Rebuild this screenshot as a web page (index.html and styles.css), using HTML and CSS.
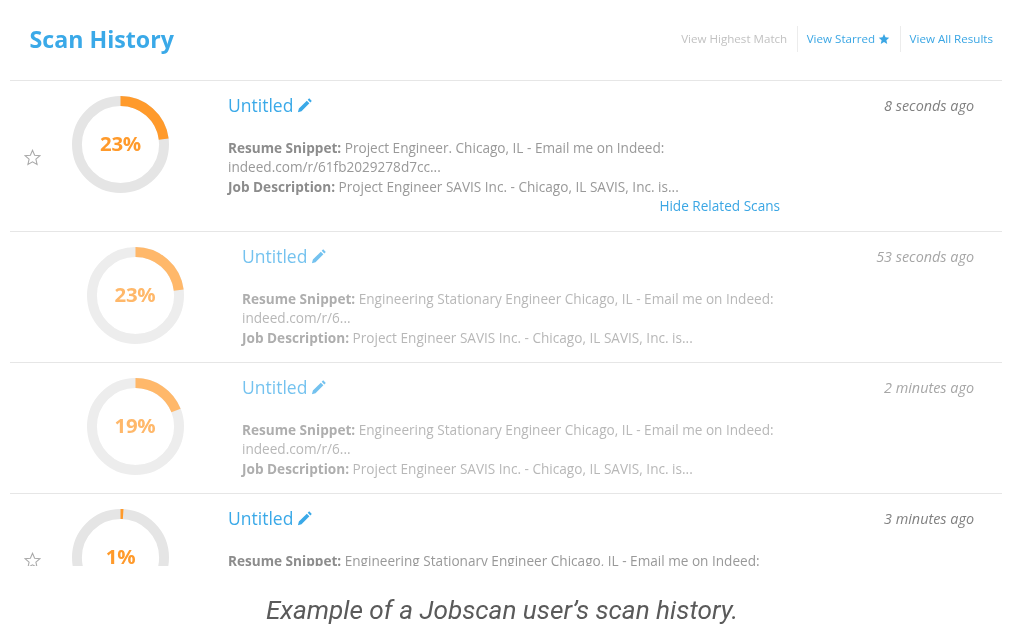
FILE: index.html
```html
<!DOCTYPE html>
<html lang="en">
<head>
<meta charset="utf-8">
<title>Scan History</title>
<link rel="stylesheet" href="styles.css">
</head>
<body>
<svg class="defs" width="0" height="0" aria-hidden="true">
  <defs>
    <path id="pencil" d="M12.2 1.3l2.6 2.6-1.5 1.5-2.6-2.6zM9.8 3.7l2.6 2.6-7.9 7.9-3.6 1 1-3.6z"/>
    <path id="star" d="M8 1.2l2 4.6 5 .5-3.8 3.3 1.1 4.9L8 12l-4.3 2.5 1.1-4.9L1 6.3l5-.5z"/>
  </defs>
</svg>
<div class="shot">
  <section class="panel">
    <header class="top">
      <h1 class="heading">Scan History</h1>
      <nav class="filters">
        <a class="filter filter-off">View Highest Match</a>
        <a class="filter">View Starred <svg class="mini-star" viewBox="0 0 16 16"><use href="#star"/></svg></a>
        <a class="filter">View All Results</a>
      </nav>
    </header>

    <article class="row row-main">
      <div class="slot"><svg class="star" viewBox="0 0 16 16"><use href="#star"/></svg></div>
      <div class="donut">
        <svg class="ring" viewBox="0 0 98 98"><circle class="track" cx="49" cy="49" r="44"/><circle class="value" cx="49" cy="49" r="44" pathLength="100" stroke-dasharray="23 100"/></svg>
        <span class="pct">23%</span>
      </div>
      <div class="body">
        <div class="head">
          <a class="name">Untitled <svg class="pencil" viewBox="0 0 16 16"><use href="#pencil"/></svg></a>
          <time class="ago">8 seconds ago</time>
        </div>
        <p class="desc"><b>Resume Snippet:</b> Project Engineer. Chicago, IL - Email me on Indeed:<br>indeed.com/r/61fb2029278d7cc...<br><b>Job Description:</b> Project Engineer SAVIS Inc. - Chicago, IL SAVIS, Inc. is...</p>
        <a class="related">Hide Related Scans</a>
      </div>
    </article>

    <article class="row row-sub">
      <div class="slot"></div>
      <div class="donut">
        <svg class="ring" viewBox="0 0 98 98"><circle class="track" cx="49" cy="49" r="44"/><circle class="value" cx="49" cy="49" r="44" pathLength="100" stroke-dasharray="23 100"/></svg>
        <span class="pct">23%</span>
      </div>
      <div class="body">
        <div class="head">
          <a class="name">Untitled <svg class="pencil" viewBox="0 0 16 16"><use href="#pencil"/></svg></a>
          <time class="ago">53 seconds ago</time>
        </div>
        <p class="desc"><b>Resume Snippet:</b> Engineering Stationary Engineer Chicago, IL - Email me on Indeed:<br>indeed.com/r/6...<br><b>Job Description:</b> Project Engineer SAVIS Inc. - Chicago, IL SAVIS, Inc. is...</p>
      </div>
    </article>

    <article class="row row-sub">
      <div class="slot"></div>
      <div class="donut">
        <svg class="ring" viewBox="0 0 98 98"><circle class="track" cx="49" cy="49" r="44"/><circle class="value" cx="49" cy="49" r="44" pathLength="100" stroke-dasharray="19 100"/></svg>
        <span class="pct">19%</span>
      </div>
      <div class="body">
        <div class="head">
          <a class="name">Untitled <svg class="pencil" viewBox="0 0 16 16"><use href="#pencil"/></svg></a>
          <time class="ago">2 minutes ago</time>
        </div>
        <p class="desc"><b>Resume Snippet:</b> Engineering Stationary Engineer Chicago, IL - Email me on Indeed:<br>indeed.com/r/6...<br><b>Job Description:</b> Project Engineer SAVIS Inc. - Chicago, IL SAVIS, Inc. is...</p>
      </div>
    </article>

    <article class="row row-main">
      <div class="slot"><svg class="star" viewBox="0 0 16 16"><use href="#star"/></svg></div>
      <div class="donut">
        <svg class="ring" viewBox="0 0 98 98"><circle class="track" cx="49" cy="49" r="44"/><circle class="value" cx="49" cy="49" r="44" pathLength="100" stroke-dasharray="1 100"/></svg>
        <span class="pct">1%</span>
      </div>
      <div class="body">
        <div class="head">
          <a class="name">Untitled <svg class="pencil" viewBox="0 0 16 16"><use href="#pencil"/></svg></a>
          <time class="ago">3 minutes ago</time>
        </div>
        <p class="desc"><b>Resume Snippet:</b> Engineering Stationary Engineer Chicago, IL - Email me on Indeed:<br>indeed.com/r/6...<br><b>Job Description:</b> Project Engineer SAVIS Inc. - Chicago, IL SAVIS, Inc. is...</p>
      </div>
    </article>
  </section>
  <p class="caption">Example of a Jobscan user’s scan history.</p>
</div>
</body>
</html>
```
FILE: styles.css
```css
* { box-sizing: border-box; }
html, body { margin: 0; background: #fff; }
body { width: 1024px; height: 641px; overflow: hidden; font-family: "Open Sans", sans-serif; }
.defs { display: block; height: 0; }
.shot { filter: blur(0.5px); }

.panel { height: 566px; margin: 0 22px 0 10px; overflow: hidden; }

.top { height: 81px; padding: 0 9px 0 19.5px; display: flex; align-items: center; justify-content: space-between; border-bottom: 1px solid #e6e6e6; }
.heading { margin: 0 0 3px; font-size: 23.2px; line-height: 32px; font-weight: 700; color: #3aa9e8; }
.filters { display: flex; align-items: center; margin-bottom: 3px; }
.filter { font-size: 11.6px; line-height: 26px; color: #3aa6e4; padding: 0 0 0 9px; margin-left: 9.5px; border-left: 1px solid #ececec; display: flex; align-items: center; gap: 3px; }
.filter-off { color: #c2c2c2; border-left: 0; padding-left: 0; margin-left: 0; }
.mini-star { width: 12px; height: 12px; fill: #3aa6e4; }

.row { display: flex; padding: 15px 28px 0 0; border-bottom: 1px solid #e6e6e6; }
.row-main { min-height: 131px; }
.row-sub { height: 131px; }
.row-sub .slot { width: 76.5px; }
.row-sub .donut, .row-sub .body { opacity: .7; }
.row-main:first-of-type { height: 151px; }

.slot { width: 62px; flex: none; align-self: center; padding: 0 0 0 14px; margin-top: -13px; }
.star { display: block; width: 17px; height: 17px; fill: none; stroke: #a9a9a9; stroke-width: 1; }

.donut { width: 97px; height: 97px; flex: none; display: grid; place-items: center; }
.ring, .pct { grid-area: 1 / 1; }
.ring { width: 97px; height: 97px; transform: rotate(-90deg); }
.track, .value { fill: none; stroke-width: 10; }
.track { stroke: #e5e5e5; }
.value { stroke: #ff9a2b; }
.pct { font-size: 20.4px; font-weight: 700; color: #ff9a2b; letter-spacing: -.3px; margin-bottom: 3px; }

.body { flex: 1; min-width: 0; margin-left: 59px; }
.row-sub .body { margin-left: 58.5px; }
.head { display: flex; justify-content: space-between; align-items: center; height: 20px; }
.name { font-size: 17.5px; line-height: 20px; color: #3aa9e8; display: flex; align-items: center; gap: 4px; margin-top: -2px; }
.pencil { width: 16px; height: 16px; fill: #3aa9e8; }
.ago { font-size: 14.4px; font-style: italic; color: #808080; margin-top: -1px; }

.desc { margin: 21.5px 0 0; font-size: 13.6px; line-height: 19.5px; color: #999; }
.desc b { color: #8c8c8c; font-weight: 700; }

.related { display: block; width: 552px; text-align: right; font-size: 13.6px; line-height: 19px; color: #3aa6e4; }

.caption { margin: 28px 20px 0 0; text-align: center; font-family: Roboto, sans-serif; font-style: italic; font-size: 26.2px; line-height: 32px; color: #5a5a5a; }
```
